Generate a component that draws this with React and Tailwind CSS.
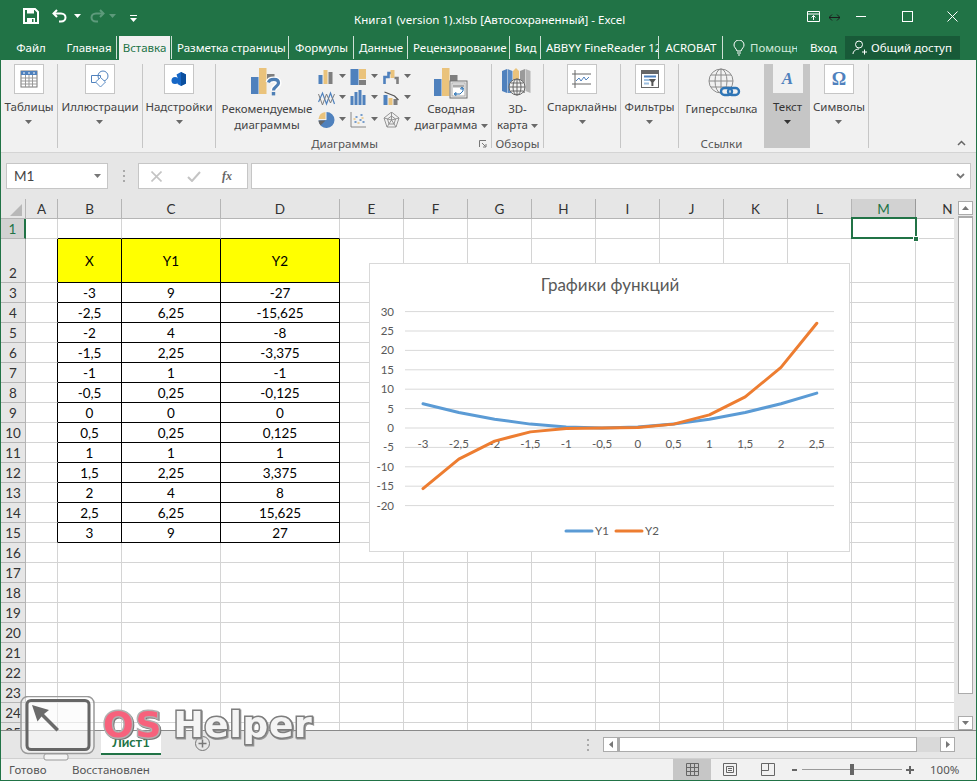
import React from 'react';

const UI = { fontFamily: '"Noto Sans", sans-serif' };
const CAL = { fontFamily: 'Lato, sans-serif' };

const COLS = ['A', 'B', 'C', 'D', 'E', 'F', 'G', 'H', 'I', 'J', 'K', 'L', 'M', 'N'];
const TABLE = {
    2: ['X', 'Y1', 'Y2'],
    3: ['-3', '9', '-27'],
    4: ['-2,5', '6,25', '-15,625'],
    5: ['-2', '4', '-8'],
    6: ['-1,5', '2,25', '-3,375'],
    7: ['-1', '1', '-1'],
    8: ['-0,5', '0,25', '-0,125'],
    9: ['0', '0', '0'],
    10: ['0,5', '0,25', '0,125'],
    11: ['1', '1', '1'],
    12: ['1,5', '2,25', '3,375'],
    13: ['2', '4', '8'],
    14: ['2,5', '6,25', '15,625'],
    15: ['3', '9', '27'],
};

const TABS = [
    ['Файл', 60, false],
    ['Главная', 56, true],
    ['Вставка', 55, true, true],
    ['Разметка страницы', 117, true],
    ['Формулы', 65, true],
    ['Данные', 54, true],
    ['Рецензирование', 102, true],
    ['Вид', 31, true],
    ['ABBYY FineReader 12', 118, true],
    ['ACROBAT', 64, true],
];

const BLUE = '#4f81bd';
const TAN = '#eac37c';
const GRAY = '#7f7f7f';

const Caret = ({ className = '', color = '#6a6a6a' }) => (
    <svg width="7" height="4" viewBox="0 0 7 4" className={className}>
        <path d="M0 0h7L3.5 4z" fill={color} />
    </svg>
);

const Group = ({ width, label, labelClass = '', children, launcher }) => (
    <div className="relative flex flex-col items-center h-[84px] border-r border-[#c6c6c6] shrink-0" style={{ width }}>
        <div className="flex flex-1 w-full justify-center">{children}</div>
        {label && <div className={`absolute bottom-[-4px] left-0 right-0 text-center text-[11.5px] leading-[16px] text-[#555] ${labelClass}`}>{label}</div>}
        {launcher && (
            <svg width="8" height="8" viewBox="0 0 8 8" className="absolute right-[4px] bottom-[0px]">
                <path d="M0.5 7V0.5H7M3 3l3.5 3.5M4 7h3V4" fill="none" stroke="#777" />
            </svg>
        )}
    </div>
);

const BoxButton = ({ label, children, boxClass = 'bg-white border border-[#c6c6c6]' }) => (
    <div className="flex flex-col items-center">
        <div className={`flex items-center justify-center w-[30px] h-[30px] ${boxClass}`}>{children}</div>
        <div className="mt-[5px] text-[11.5px] leading-[16px] text-[#444] whitespace-nowrap">{label}</div>
        <Caret className="mt-[5px]" />
    </div>
);

const TableIcon = () => (
    <svg width="18" height="18" viewBox="0 0 18 18">
        <rect x="1" y="1" width="16" height="16" fill="#fff" stroke="#777" />
        <rect x="1" y="1" width="16" height="4" fill={BLUE} />
        <path d="M3 3h2M8 3h2M13 3h2" stroke="#fff" />
        <path d="M1 8h16M1 11h16M1 14h16M5.5 5v12M9 5v12M12.5 5v12" stroke="#999" fill="none" />
    </svg>
);

const ShapesIcon = () => (
    <svg width="20" height="18" viewBox="0 0 20 18" fill="none" stroke={BLUE}>
        <path d="M1.5 5.5h9v7h-9z" fill="#fff" />
        <circle cx="13" cy="6" r="5" fill="none" />
        <path d="M10.5 7.5l5 4.5-5 5-5-5z" fill="#fff" stroke="#5f8fc7" />
    </svg>
);

const AddinIcon = () => (
    <svg width="16" height="16" viewBox="0 0 16 16">
        <path d="M5.5 3.5L10 1l5 2.5v9L10 15l-3.5-2V6.5z" fill="#1767c6" />
        <path d="M10 1l5 2.5v9L10 15z" fill="#0b4f9e" />
        <circle cx="4" cy="9.5" r="3.5" fill="#1767c6" />
    </svg>
);

const RecommendIcon = () => (
    <svg width="32" height="30" viewBox="0 0 32 30">
        <rect x="0" y="10" width="7.5" height="17" fill={BLUE} />
        <rect x="8" y="1" width="7.5" height="26" fill={TAN} />
        <rect x="16" y="7" width="7.5" height="6" fill={GRAY} />
        <path d="M17.5 15.5c1-4 10-4.5 10 .5 0 3.5-5 3.5-5 7.5" fill="none" stroke="#fff" strokeWidth="6" />
        <path d="M17.5 15.5c1-4 10-4.5 10 .5 0 3.5-5 3.5-5 7.5" fill="none" stroke="#4e7fb5" strokeWidth="3.2" />
        <rect x="20.8" y="25" width="3.4" height="3.4" fill="#4e7fb5" />
    </svg>
);

const SMALL_CHARTS = [
    <g key="0"><rect x="0" y="6" width="4" height="9" fill={BLUE} /><rect x="5" y="1" width="4" height="14" fill={TAN} /><rect x="10" y="3" width="4" height="12" fill={GRAY} /></g>,
    <g key="1"><rect x="0" y="0" width="8" height="16" fill={BLUE} /><rect x="8.5" y="0" width="7" height="10" fill={TAN} /><rect x="8.5" y="11" width="7" height="5" fill={GRAY} /></g>,
    <g key="2"><path d="M1 15V8h4V4h5" fill="none" stroke={BLUE} strokeWidth="2.6" /><rect x="7" y="1" width="4" height="8" fill={TAN} /><path d="M11 9h3v6" fill="none" stroke={GRAY} strokeWidth="2.6" /></g>,
    <g key="3" fill="none"><path d="M0 12L4 3l4 11 4-11 4 11" stroke={BLUE} strokeWidth="1.2" /><path d="M0 4l4 11 4-11 4 9 4-9" stroke={GRAY} strokeWidth="1" /></g>,
    <g key="4"><rect x="0" y="6" width="3" height="9" fill={BLUE} /><rect x="4" y="2" width="3" height="13" fill={BLUE} /><rect x="8" y="0" width="3" height="15" fill={BLUE} /><rect x="12" y="5" width="3" height="10" fill={BLUE} /></g>,
    <g key="5"><rect x="0" y="5" width="4" height="10" fill={BLUE} /><rect x="5" y="8" width="4" height="7" fill={TAN} /><rect x="10" y="9" width="4" height="6" fill={GRAY} /><path d="M1 2l5 2 5 2 4 4" fill="none" stroke="#555" strokeWidth="1.2" /></g>,
    <g key="6"><path d="M8 0a8 8 0 1 1-8 8.5l8-.5z" fill={BLUE} /><path d="M0 7a8 8 0 0 1 7-7v7z" fill={TAN} /><path d="M0 8.5h7l-5 5a8 8 0 0 1-2-5z" fill="#666" /></g>,
    <g key="7"><path d="M0.5 0v15h15" fill="none" stroke="#888" /><path d="M4 10h2M5 5h2M9 8h2M10 3h2M12 10h2" stroke={BLUE} strokeWidth="1.6" /><path d="M7 11h2M11 6h2M3 7h2" stroke={TAN} strokeWidth="1.6" /></g>,
    <g key="8" fill="none" stroke="#8a8a8a" strokeWidth="0.9"><path d="M8 0l7.5 6-3 9h-9l-3-9zM8 4l4 3-1.5 5h-5L4 7zM8 0v8M.5 6L8 8l7.5-2M3.5 15L8 8l4.5 7" /></g>,
];

const PivotIcon = () => (
    <svg width="34" height="32" viewBox="0 0 34 32">
        <rect x="0" y="12" width="7.5" height="17" fill={BLUE} />
        <rect x="8" y="1" width="7.5" height="28" fill={TAN} />
        <rect x="16" y="8" width="7.5" height="8" fill={GRAY} />
        <rect x="16" y="14" width="17" height="17" fill="#f1f1f1" stroke="#6f6f6f" />
        <rect x="18" y="16" width="13" height="13" fill="#fff" stroke="#aaa" />
        <path d="M19 19h11" stroke="#aaa" strokeWidth="3" />
        <path d="M21 27h5l3-3v-3M28 20l-1.5 2h3zM20 27l2-1.5v3z" fill="none" stroke="#2e75b6" />
    </svg>
);

const MapIcon = () => (
    <svg width="30" height="30" viewBox="0 0 30 30">
        <path d="M0 4l5-2v24l-5-2z" fill={BLUE} />
        <path d="M5.5 2l5 2v22l-5 0z" fill="#5c8cc4" />
        <path d="M11 4l3-3 3 3v10h-6z" fill={TAN} />
        <path d="M18 4l5-2v24h-5z" fill="#9a9a9a" />
        <path d="M23.5 2l5 2v22l-5-2z" fill="#b5b5b5" />
        <circle cx="15" cy="20" r="8" fill="#f1f1f1" stroke="#666" />
        <path d="M7 20h16M15 12v16M9 16h12M9 24h12" stroke="#666" fill="none" />
        <ellipse cx="15" cy="20" rx="4" ry="8" fill="none" stroke="#666" />
    </svg>
);

const SparkIcon = () => (
    <svg width="20" height="18" viewBox="0 0 20 18" fill="none">
        <path d="M0 4h19M0 14h19M3 0v18" stroke="#666" />
        <path d="M4 11l3-3 2 3 3-4 2 3 3-3" stroke={BLUE} />
    </svg>
);

const FilterIcon = () => (
    <svg width="18" height="18" viewBox="0 0 18 18">
        <rect x="0.5" y="0.5" width="17" height="17" fill="#fff" stroke="#666" />
        <rect x="0.5" y="0.5" width="17" height="3.5" fill="#666" />
        <path d="M3 6.5h12" stroke={BLUE} strokeWidth="2" />
        <path d="M3 10h6M3 13.5h5" stroke="#9fc0e0" strokeWidth="2" />
        <path d="M8 9h7l-2.6 3.5V16h-2v-3.5z" fill="#555" />
    </svg>
);

const LinkIcon = () => (
    <svg width="34" height="32" viewBox="0 0 34 32" fill="none">
        <circle cx="14" cy="13" r="12" stroke="#8c8c8c" fill="#f1f1f1" />
        <ellipse cx="14" cy="13" rx="6" ry="12" stroke="#8c8c8c" />
        <path d="M2 13h24M14 1v24M4 7h20M4 19h20" stroke="#8c8c8c" />
        <rect x="14" y="20" width="11" height="7" rx="3.5" stroke="#2e75b6" strokeWidth="2.4" fill="#f1f1f1" />
        <rect x="21" y="20" width="11" height="7" rx="3.5" stroke="#2e75b6" strokeWidth="2.4" />
    </svg>
);

const Ribbon = () => (
    <div className="flex h-[92px] pt-[4px] bg-[#f1f1f1] shrink-0" style={UI}>
        <Group width={57}><BoxButton label="Таблицы"><TableIcon /></BoxButton></Group>
        <Group width={85}><BoxButton label="Иллюстрации"><ShapesIcon /></BoxButton></Group>
        <Group width={73}><BoxButton label="Надстройки"><AddinIcon /></BoxButton></Group>
        <Group width={276} label="Диаграммы" labelClass="pr-[18px]" launcher>
            <div className="flex w-full">
                <div className="flex flex-col items-center w-[102px] shrink-0">
                    <div className="h-[34px] pt-[3px] flex justify-center"><RecommendIcon /></div>
                    <div className="mt-[3px] text-center text-[11.5px] leading-[16px] text-[#444]">Рекомендуемые<br />диаграммы</div>
                </div>
                <div className="grid grid-cols-3 w-[97px] h-[69px] pt-[5px] shrink-0">
                    {SMALL_CHARTS.map((c, i) => (
                        <div key={i} className="flex items-start gap-[4px]">
                            <svg width="17" height="16" viewBox="0 0 16 16">{c}</svg>
                            <Caret className="mt-[5px]" />
                        </div>
                    ))}
                </div>
                <div className="flex flex-col items-center w-[72px] shrink-0">
                    <div className="h-[34px] pt-[3px]"><PivotIcon /></div>
                    <div className="mt-[3px] text-center text-[11.5px] leading-[16px] text-[#444] whitespace-nowrap">Сводная<br />диаграмма <Caret className="inline align-middle" /></div>
                </div>
            </div>
        </Group>
        <Group width={52} label="Обзоры">
            <div className="flex flex-col items-center">
                <div className="h-[34px] pt-[3px]"><MapIcon /></div>
                <div className="mt-[3px] text-center text-[11.5px] leading-[16px] text-[#444] whitespace-nowrap">3D-<br />карта <Caret className="inline align-middle" /></div>
            </div>
        </Group>
        <Group width={77}><BoxButton label="Спарклайны"><SparkIcon /></BoxButton></Group>
        <Group width={58}><BoxButton label="Фильтры"><FilterIcon /></BoxButton></Group>
        <Group width={86} label="Ссылки">
            <div className="flex flex-col items-center">
                <div className="h-[34px] pt-[4px] pl-[6px]"><LinkIcon /></div>
                <div className="mt-[3px] text-[11.5px] leading-[16px] text-[#444] whitespace-nowrap">Гиперссылка</div>
            </div>
        </Group>
        <div className="flex flex-col items-center w-[45px] h-[84px] bg-[#c6c6c6] shrink-0">
            <div className="flex items-center justify-center w-[30px] h-[29px] bg-[#f1f1f1] text-[17px] font-bold italic text-[#4f81bd]" style={{ fontFamily: '"Liberation Serif", serif' }}>A</div>
            <div className="mt-[6px] text-[11.5px] leading-[16px] text-[#333]">Текст</div>
            <Caret className="mt-[5px]" color="#333" />
        </div>
        <Group width={59}>
            <BoxButton label="Символы">
                <span className="text-[18px] font-bold text-[#4f81bd]" style={{ fontFamily: '"Liberation Serif", serif' }}>Ω</span>
            </BoxButton>
        </Group>
        <div className="relative flex-1">
            <svg width="9" height="6" viewBox="0 0 9 6" className="absolute right-[10px] bottom-[6px]">
                <path d="M1 5l3.5-3.5L8 5" fill="none" stroke="#666" strokeWidth="1.5" />
            </svg>
        </div>
    </div>
);

const TitleBar = () => (
    <div className="relative flex h-[36px] shrink-0 text-white" style={UI}>
        <div className="flex items-start w-[353px] shrink-0">
            <svg width="16" height="16" viewBox="0 0 16 16" className="ml-[22px] mt-[8px]">
                <path d="M1 1h11l3 3v11H1z" fill="none" stroke="#fff" strokeWidth="2" />
                <path d="M4 1.5h7v4H4z" fill="#fff" />
                <path d="M4 10h8v5H4z" fill="#fff" />
                <path d="M9 11h1.5v3H9z" fill="#217346" />
            </svg>
            <svg width="15" height="14" viewBox="0 0 15 14" className="ml-[13px] mt-[9px]" fill="none" stroke="#fff" strokeWidth="2">
                <path d="M5 1L1.5 4.5 5 8" /><path d="M2 4.5h7c6 0 6 8 0 8H7" />
            </svg>
            <Caret className="ml-[7px] mt-[14px]" color="#fff" />
            <svg width="15" height="14" viewBox="0 0 15 14" className="ml-[9px] mt-[9px]" fill="none" stroke="#5d9a7b" strokeWidth="2">
                <path d="M10 1l3.5 3.5L10 8" /><path d="M13 4.5H6c-6 0-6 8 0 8h2" />
            </svg>
            <Caret className="ml-[4px] mt-[14px]" color="#5d9a7b" />
            <svg width="7" height="7" viewBox="0 0 7 7" className="ml-[14px] mt-[15px]" fill="#fff">
                <path d="M0 0h7v1H0zM0 3h7L3.5 7z" />
            </svg>
        </div>
        <div className="flex-1 pt-[11px] text-[11.5px] leading-[18px] whitespace-nowrap">Книга1 (version 1).xlsb [Автосохраненный] - Excel</div>
        <div className="flex items-start shrink-0 pr-[18px]">
            <svg width="13" height="11" viewBox="0 0 13 11" className="mt-[11px]" fill="none" stroke="#fff">
                <path d="M.5 .5h12v10H.5zM.5 3h12M6.5 9V4.5M4.5 6.5l2-2 2 2" />
            </svg>
            <svg width="11" height="7" viewBox="0 0 11 7" className="ml-[9px] mt-[14px]" fill="none" stroke="#1d1d1d">
                <path d="M0 3.5h11M3 .5l-3 3 3 3M8 .5l3 3-3 3" />
            </svg>
            <div className="ml-[16px] mt-[16px] w-[10px] h-px bg-white" />
            <div className="ml-[36px] mt-[11px] w-[11px] h-[11px] border border-white" />
            <svg width="11" height="11" viewBox="0 0 11 11" className="ml-[34px] mt-[11px]" stroke="#fff">
                <path d="M.5 .5l10 10M10.5 .5l-10 10" />
            </svg>
        </div>
    </div>
);

const TabsRow = () => (
    <div className="flex h-[24px] shrink-0 text-[11.5px] leading-[24px] text-white" style={UI}>
        {TABS.map(([label, w, sep, active]) => (
            <div key={label} className="relative shrink-0 text-center" style={{ width: w }}>
                {active ? (
                    <div className="absolute left-[2px] right-[2px] top-0 bottom-0 bg-[#f1f1f1] text-[#217346]">{label}</div>
                ) : (
                    <div className="overflow-hidden whitespace-nowrap px-[5px]">{label}</div>
                )}
                {sep && <div className="absolute right-0 top-0 h-[23px] w-px bg-[#cfe0d6]" />}
            </div>
        ))}
        <svg width="12" height="16" viewBox="0 0 12 16" className="ml-[10px] mt-[4px] shrink-0" fill="none" stroke="#fff">
            <path d="M4 11C3 8 1 7.5 1 5a5 5 0 0 1 10 0c0 2.5-2 3-3 6zM4 13h4M5 15h2" />
        </svg>
        <div className="ml-[5px] w-[47px] overflow-hidden whitespace-nowrap text-[#cfe8da] shrink-0">Помощник</div>
        <div className="ml-[13px] w-[26px] shrink-0">Вход</div>
        <div className="ml-[9px] flex items-center gap-[4px] w-[115px] pl-[7px] h-[23px] bg-[#185a38] shrink-0">
            <svg width="15" height="15" viewBox="0 0 15 15" fill="none" stroke="#fff">
                <circle cx="7" cy="4.5" r="3.5" /><path d="M1 14c0-3 3-5 6-5M10 12h5M12.5 9.5v5" />
            </svg>
            <span className="whitespace-nowrap">Общий доступ</span>
        </div>
    </div>
);

const FormulaBar = () => (
    <div className="flex h-[47px] pt-[10px] pl-[5px] bg-[#e6e6e6] border-t border-[#d4d4d4] shrink-0" style={CAL}>
        <div className="flex items-center justify-between w-[102px] h-[26px] pl-[7px] pr-[6px] bg-white border border-[#c6c6c6] text-[13.5px] text-[#444]">
            M1 <Caret color="#777" />
        </div>
        <div className="flex flex-col gap-[3px] ml-[15px] mr-[13px] pt-[7px]">
            <div className="w-[2px] h-[2px] bg-[#aaa]" /><div className="w-[2px] h-[2px] bg-[#aaa]" /><div className="w-[2px] h-[2px] bg-[#aaa]" />
        </div>
        <div className="flex items-center w-[110px] h-[26px] pl-[12px] bg-white border border-[#c6c6c6]">
            <svg width="11" height="11" viewBox="0 0 11 11" stroke="#c4c4c4" strokeWidth="1.6"><path d="M.5 .5l10 10M10.5 .5l-10 10" /></svg>
            <svg width="14" height="11" viewBox="0 0 14 11" className="ml-[25px]" fill="none" stroke="#c4c4c4" strokeWidth="2"><path d="M1 6l4 4 8-9" /></svg>
            <span className="ml-[21px] text-[12px] font-bold italic text-[#666]" style={{ fontFamily: '"Liberation Serif", serif' }}>fx</span>
        </div>
        <div className="relative flex-1 h-[26px] ml-[3px] mr-[5px] bg-white border border-[#c6c6c6]">
            <svg width="9" height="6" viewBox="0 0 9 6" className="absolute right-[5px] top-[9px]"><path d="M1 1l3.5 3.5L8 1" fill="none" stroke="#777" strokeWidth="1.8" /></svg>
        </div>
    </div>
);

const colHeadClass = (c) =>
    c === 'M'
        ? 'bg-[#d2d2d2] text-[#217346] border-r border-b border-[#9a9a9a]'
        : 'bg-[#e6e6e6] text-[#333] border-r border-b border-[#b5b5b5]';

const cellClass = (r, c) => {
    const inTable = r >= 2 && r <= 15 && ['B', 'C', 'D'].includes(c);
    const right = inTable || (c === 'A' && r >= 2 && r <= 15) ? 'border-r-black' : 'border-r-[#d4d4d4]';
    const bottom = inTable || (r === 1 && ['B', 'C', 'D'].includes(c)) ? 'border-b-black' : 'border-b-[#d4d4d4]';
    const fill = r === 2 && inTable ? 'bg-[#ffff00]' : 'bg-white';
    return `${right} ${bottom} ${fill}`;
};

const Sheet = () => {
    const rows = Array.from({ length: 25 }, (_, i) => i + 1);
    return (
        <div className="relative h-[531px] w-[953px] overflow-hidden shrink-0" style={CAL}>
            <div className="grid grid-cols-[25px_32px_64px_99px_119px_repeat(10,64px)] grid-rows-[20px_20px_44px_repeat(23,20px)] text-[13.5px] leading-[17px]">
                <div className="relative bg-[#e6e6e6] border-r border-b border-[#b5b5b5]">
                    <svg width="12" height="12" viewBox="0 0 12 12" className="absolute right-[3px] bottom-[2px]"><path d="M12 0v12H0z" fill="#b8b8b8" /></svg>
                </div>
                {COLS.map((c) => (
                    <div key={c} className={`flex items-center justify-center pt-px ${colHeadClass(c)}`}>{c}</div>
                ))}
                {rows.map((r) => (
                    <React.Fragment key={r}>
                        <div className={r === 1
                            ? 'flex items-end justify-center bg-[#d2d2d2] text-[#217346] border-r-2 border-b border-r-[#217346] border-b-[#b5b5b5]'
                            : 'flex items-end justify-center bg-[#e6e6e6] text-[#333] border-r border-b border-[#b5b5b5]'}>{r}</div>
                        {COLS.map((c, ci) => (
                            <div key={c} className={`flex items-center justify-center pt-px border-r border-b text-black ${cellClass(r, c)}`}>
                                {TABLE[r] && ci >= 1 && ci <= 3 ? TABLE[r][ci - 1] : ''}
                            </div>
                        ))}
                    </React.Fragment>
                ))}
            </div>
            <div className="absolute left-[850px] top-[18px] w-[66px] h-[22px] border-2 border-[#217346]" />
            <div className="absolute left-[912px] top-[37px] w-[6px] h-[6px] bg-[#217346] border border-white" />
            <Chart />
        </div>
    );
};

const Y1 = [6.25, 4, 2.25, 1, 0.25, 0, 0.25, 1, 2.25, 4, 6.25, 9];
const Y2 = [-15.625, -8, -3.375, -1, -0.125, 0, 0.125, 1, 3.375, 8, 15.625, 27];
const CATS = ['-3', '-2,5', '-2', '-1,5', '-1', '-0,5', '0', '0,5', '1', '1,5', '2', '2,5'];
const TICKS = [30, 25, 20, 15, 10, 5, 0, -5, -10, -15, -20];

const px = (i) => 53 + i * 35.8;
const py = (v) => 164 - v * 3.88;
const line = (vals) => vals.map((v, i) => `${px(i)},${py(v)}`).join(' ');

const Chart = () => (
    <div className="absolute left-[368px] top-[64px] w-[481px] h-[289px] bg-white border border-[#d9d9d9]">
        <svg width="479" height="287" viewBox="0 0 479 287" style={CAL}>
            <text x="240" y="27" textAnchor="middle" fontSize="17" fill="#595959">Графики функций</text>
            {TICKS.map((t) => (
                <g key={t}>
                    <line x1="35" x2="464" y1={py(t)} y2={py(t)} stroke="#d9d9d9" />
                    <text x="24" y={py(t) + 4} textAnchor="end" fontSize="11.5" fill="#595959">{t}</text>
                </g>
            ))}
            {CATS.map((c, i) => (
                <text key={c} x={px(i)} y="184" textAnchor="middle" fontSize="11.5" fill="#595959">{c}</text>
            ))}
            <polyline points={line(Y1)} fill="none" stroke="#5b9bd5" strokeWidth="3" strokeLinecap="round" strokeLinejoin="round" />
            <polyline points={line(Y2)} fill="none" stroke="#ed7d31" strokeWidth="3" strokeLinecap="round" strokeLinejoin="round" />
            <line x1="196" x2="222" y1="267" y2="267" stroke="#5b9bd5" strokeWidth="3" strokeLinecap="round" />
            <text x="225" y="271" fontSize="11.5" fill="#595959">Y1</text>
            <line x1="246" x2="272" y1="267" y2="267" stroke="#ed7d31" strokeWidth="3" strokeLinecap="round" />
            <text x="275" y="271" fontSize="11.5" fill="#595959">Y2</text>
        </svg>
    </div>
);

const VScroll = () => (
    <div className="flex flex-col w-[15px] h-[531px] ml-[4px] pt-[2px] shrink-0 bg-[#e6e6e6]">
        <div className="flex items-center justify-center h-[14px] bg-white border border-[#ababab]">
            <svg width="7" height="4" viewBox="0 0 7 4"><path d="M0 4h7L3.5 0z" fill="#777" /></svg>
        </div>
        <div className="h-[478px] mt-[1px] bg-white border-x border-b border-t-2 border-[#ababab]" />
        <div className="flex-1" />
        <div className="flex items-center justify-center h-[14px] bg-white border border-[#ababab]">
            <Caret color="#777" />
        </div>
    </div>
);

const SheetTabs = () => (
    <div className="flex items-start h-[28px] bg-[#e6e6e6] border-t border-[#8a8a8a] shrink-0" style={CAL}>
        <div className="flex items-center justify-center ml-[100px] w-[60px] h-[24px] pt-[2px] bg-white border-b-2 border-[#217346] text-[13px] font-bold text-[#217346]">Лист1</div>
        <svg width="15" height="15" viewBox="0 0 15 15" className="ml-[34px] mt-[5px]" fill="none" stroke="#777">
            <circle cx="7.5" cy="7.5" r="7" /><path d="M7.5 3.5v8M3.5 7.5h8" strokeWidth="1.5" />
        </svg>
        <div className="flex flex-col gap-[3px] ml-[377px] mt-[8px]">
            <div className="w-[2px] h-[2px] bg-[#aaa]" /><div className="w-[2px] h-[2px] bg-[#aaa]" /><div className="w-[2px] h-[2px] bg-[#aaa]" />
        </div>
        <div className="flex ml-[14px] mt-[6px] h-[15px] w-[352px] bg-[#d9d9d9]">
            <div className="flex items-center justify-center w-[15px] bg-white border border-[#ababab]">
                <svg width="4" height="7" viewBox="0 0 4 7"><path d="M4 0v7L0 3.5z" fill="#777" /></svg>
            </div>
            <div className="w-[299px] bg-white border-y border-r border-l-2 border-[#ababab]" />
            <div className="flex-1" />
            <div className="flex items-center justify-center w-[15px] bg-white border border-[#ababab]">
                <svg width="4" height="7" viewBox="0 0 4 7"><path d="M0 0v7l4-3.5z" fill="#777" /></svg>
            </div>
        </div>
    </div>
);

const StatusBar = () => (
    <div className="flex items-center h-[22px] bg-[#f1f1f1] border-t border-[#d0d0d0] text-[11.5px] text-[#555] shrink-0" style={UI}>
        <span className="ml-[8px] w-[63px]">Готово</span>
        <span className="w-[601px]">Восстановлен</span>
        <div className="flex items-center justify-center w-[38px] h-[21px] bg-[#c6c6c6]">
            <svg width="13" height="13" viewBox="0 0 13 13" fill="none" stroke="#666"><path d="M.5 .5h12v12H.5zM.5 4.5h12M.5 8.5h12M4.5 .5v12M8.5 .5v12" /></svg>
        </div>
        <div className="flex items-center justify-center w-[14px] ml-[12px]">
            <svg width="14" height="13" viewBox="0 0 14 13" fill="none" stroke="#666"><path d="M.5 .5h13v12H.5zM3.5 3.5h7v6h-7zM5 5.5h4M5 7.5h4" /></svg>
        </div>
        <div className="flex items-center justify-center w-[14px] ml-[24px]">
            <svg width="14" height="13" viewBox="0 0 14 13" fill="none" stroke="#666"><path d="M.5 .5h13v12H.5zM.5 7.5h7M7.5 .5v7" /></svg>
        </div>
        <div className="w-[5px] h-[2px] ml-[17px] bg-[#666]" />
        <div className="relative w-[100px] h-px ml-[5px] bg-[#9a9a9a]">
            <div className="absolute left-[48px] top-[-5px] w-[4px] h-[11px] bg-[#666]" />
        </div>
        <svg width="8" height="8" viewBox="0 0 8 8" className="ml-[4px]" stroke="#666" strokeWidth="2"><path d="M0 4h8M4 0v8" /></svg>
        <span className="ml-[16px]">100%</span>
    </div>
);

// watermark over the sheet, the monitor is see-through
const Watermark = () => (
    <div className="absolute left-[19px] top-[696px] flex items-start pointer-events-none">
        <svg width="76" height="65" viewBox="0 0 76 65" fill="none">
            <rect x="1" y="0.5" width="73" height="57" rx="7" fill="#ffffff" fillOpacity="0.35" stroke="#9a9a9a" strokeWidth="1.5" />
            <rect x="7" y="4.5" width="62" height="49" rx="4" fill="#f4f4f4" fillOpacity="0.3" stroke="#666" strokeWidth="3" />
            <path d="M12 9l17 5-5 4 15 15-2.5 2.5-15-15-4 5z" fill="#6b6b6b" />
            <rect x="24" y="58" width="24" height="6" rx="2" fill="#f4f4f4" stroke="#9a9a9a" />
        </svg>
        <div className="ml-[7px] mt-[7px] flex items-baseline text-[36px] leading-[44px] font-bold" style={{ fontFamily: '"DejaVu Sans", sans-serif' }}>
            <span className="text-[#f7617c] tracking-[2px] [-webkit-text-stroke:3px_#b0b0b0] [paint-order:stroke_fill] drop-shadow-[1px_1px_0_#777]">OS</span>
            <span className="ml-[10px] tracking-[0.7px] text-[#f4f4f4] [-webkit-text-stroke:3px_#7e7e7e] [paint-order:stroke_fill] drop-shadow-[1px_1px_0_#999]">Helper</span>
        </div>
    </div>
);

const App = () => (
    <div className="relative flex flex-col w-[977px] h-[781px] overflow-hidden bg-[#217346] border-x border-b border-[#217346]">
        <TitleBar />
        <TabsRow />
        <Ribbon />
        <FormulaBar />
        <div className="flex bg-[#e6e6e6] shrink-0">
            <Sheet />
            <VScroll />
        </div>
        <SheetTabs />
        <StatusBar />
        <Watermark />
    </div>
);

export default App;
